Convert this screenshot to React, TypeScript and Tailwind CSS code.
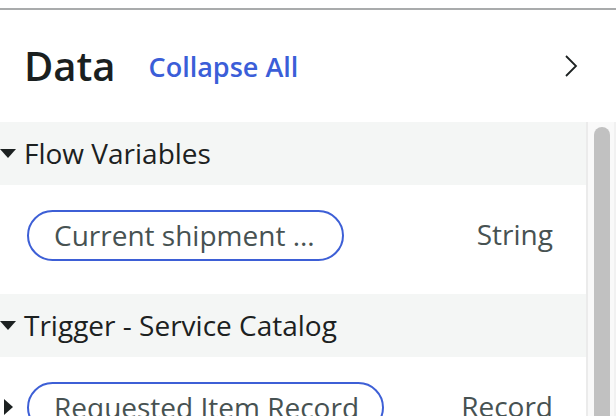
import React from 'react';

const font = { fontFamily: '"Open Sans", "Liberation Sans", sans-serif' };

const CaretDown = () => (
    <svg width="16" height="9" viewBox="0 0 16 9" className="shrink-0">
        <path d="M0 0 H16 L8 9 Z" fill="#1c2121" />
    </svg>
);

const CaretRight = () => (
    <svg width="9" height="16" viewBox="0 0 9 16" className="shrink-0">
        <path d="M0 0 V16 L9 8 Z" fill="#1c2121" />
    </svg>
);

const SectionHeader: React.FC<{ title: string }> = ({ title }) => (
    <div className="h-[63px] bg-[#f4f6f5] flex items-center">
        <CaretDown />
        <span className="ml-[8px] pb-[2px] text-[28px] text-[#1c2121] leading-none">{title}</span>
    </div>
);

const VariableRow: React.FC<{ label: string; type: string; width: string; expandable?: boolean }> = ({
    label,
    type,
    width,
    expandable,
}) => (
    <div className="h-[109px] flex items-start pt-[25px] relative">
        {expandable && (
            <div className="absolute left-[4px] top-[42px]">
                <CaretRight />
            </div>
        )}
        <div
            className={`ml-[27px] h-[51px] ${width} border-2 border-[#3d5fd6] rounded-full flex items-center pl-[25px] pb-[2px] text-[28px] text-[#475252] whitespace-nowrap overflow-hidden`}
        >
            {label}
        </div>
        <div className="ml-auto mr-[33px] h-[51px] pb-[3px] flex items-center text-[28px] text-[#475252]">{type}</div>
    </div>
);

const App: React.FC = () => {
    return (
        <div className="w-[616px] h-[416px] bg-white overflow-hidden flex flex-col" style={font}>
            <div className="h-[2px] mt-[8px] bg-[#a9abac] shrink-0" />

            {/* Header */}
            <div className="h-[112px] shrink-0 flex items-center pl-[24px] pr-[38px]">
                <h1 className="text-[40px] font-semibold text-[#1a1f1f] leading-none">Data</h1>
                <button className="ml-[33px] text-[27px] font-semibold text-[#3b5ed8] leading-none">Collapse All</button>
                <svg width="14" height="24" viewBox="0 0 14 24" className="ml-auto" fill="none">
                    <path d="M2 2 L12 12 L2 22" stroke="#1c2121" strokeWidth="1.8" />
                </svg>
            </div>

            {/* Body */}
            <div className="flex-1 flex min-h-0">
                <div className="w-[586px] shrink-0">
                    <SectionHeader title="Flow Variables" />
                    <VariableRow label="Current shipment ..." type="String" width="w-[317px]" />
                    <SectionHeader title="Trigger - Service Catalog" />
                    <VariableRow label="Requested Item Record" type="Record" width="w-[357px]" expandable />
                </div>
                <div className="flex-1 bg-[#f9f9f9] border-l-2 border-[#ebebeb] border-r-2 border-r-[#f1f1f1] pt-[5px] pl-[6px]">
                    <div className="w-[16px] h-full bg-[#c1c1c1] rounded-t-full" />
                </div>
            </div>
        </div>
    );
};

export default App;
